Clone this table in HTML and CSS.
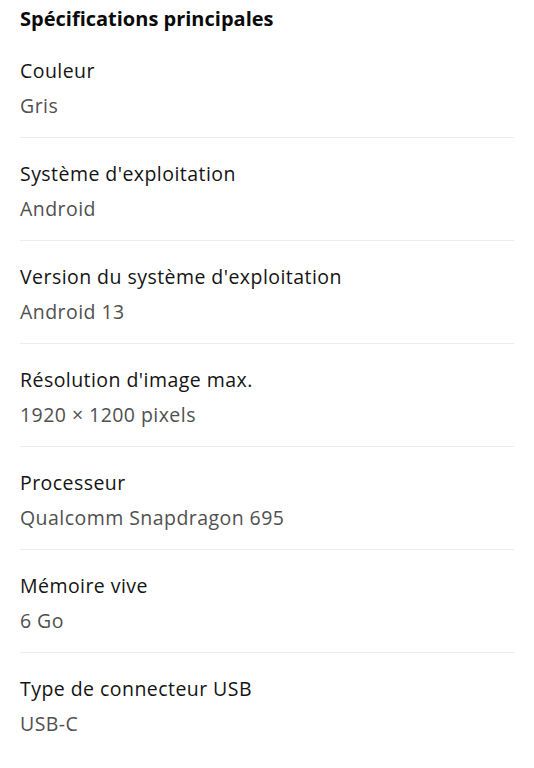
FILE: index.html
```html
<!DOCTYPE html>
<html lang="fr">
<head>
<meta charset="utf-8">
<link rel="stylesheet" href="styles.css">
</head>
<body>
<main class="specs">
  <h2 class="specs-title">Spécifications principales</h2>
  <dl class="spec-list">
    <div class="spec"><dt class="spec-label">Couleur</dt><dd class="spec-value">Gris</dd></div>
    <div class="spec"><dt class="spec-label">Système d'exploitation</dt><dd class="spec-value">Android</dd></div>
    <div class="spec"><dt class="spec-label">Version du système d'exploitation</dt><dd class="spec-value">Android 13</dd></div>
    <div class="spec"><dt class="spec-label">Résolution d'image max.</dt><dd class="spec-value">1920 × 1200 pixels</dd></div>
    <div class="spec"><dt class="spec-label">Processeur</dt><dd class="spec-value">Qualcomm Snapdragon 695</dd></div>
    <div class="spec"><dt class="spec-label">Mémoire vive</dt><dd class="spec-value">6 Go</dd></div>
    <div class="spec spec-last"><dt class="spec-label">Type de connecteur USB</dt><dd class="spec-value">USB-C</dd></div>
  </dl>
</main>
</body>
</html>
```
FILE: styles.css
```css
html, body {
  margin: 0;
  padding: 0;
  background: #ffffff;
}
body {
  font-family: "Open Sans", "Noto Sans", sans-serif;
  color: #111111;
}
.specs {
  padding: 5px 20px 0 20px;
}
.specs-title {
  margin: 0;
  font-size: 20px;
  font-weight: 700;
  line-height: 28px;
  color: #0a0a0a;
  letter-spacing: 0;
}
.spec-list {
  margin: 0;
  padding: 0;
}
.spec {
  padding: 22px 0 17px 0;
  border-bottom: 1px solid #ececec;
}
.spec:first-child {
  padding-top: 24px;
}
.spec-last {
  border-bottom: none;
}
.spec-label {
  margin: 0 0 7px 0;
  font-size: 19.5px;
  line-height: 28px;
  color: #141414;
  letter-spacing: 0.45px;
}
.spec-value {
  margin: 0;
  font-size: 19.5px;
  line-height: 28px;
  color: #505050;
  letter-spacing: 0.45px;
}
```
